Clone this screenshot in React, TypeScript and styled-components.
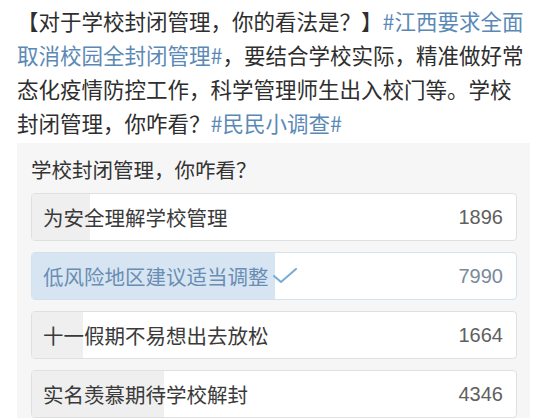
import React from 'react';
import styled, { createGlobalStyle } from 'styled-components';

interface Option {
  label: string;
  votes: number;
  chosen?: boolean;
}

const options: Option[] = [
  { label: '为安全理解学校管理', votes: 1896 },
  { label: '低风险地区建议适当调整', votes: 7990, chosen: true },
  { label: '十一假期不易想出去放松', votes: 1664 },
  { label: '实名羡慕期待学校解封', votes: 4346 },
];

const total = options.reduce((sum, o) => sum + o.votes, 0);

const GlobalStyle = createGlobalStyle`
  body {
    margin: 0;
    background: #ffffff;
    font-family: "Noto Sans CJK SC", "Noto Sans", sans-serif;
  }
`;

const Page = styled.div`
  width: 548px;
  height: 418px;
  overflow: hidden;
  padding: 4px 18px 0 17px;
  box-sizing: border-box;
`;

const Body = styled.p`
  margin: 0;
  font-size: 21.5px;
  line-height: 34px;
  color: #2e2e2e;
`;

const Tag = styled.span`
  color: #5b89b6;
`;

const Poll = styled.div`
  margin-top: 3px;
  background: #f6f6f6;
  padding: 13px 13px 14px 14px;
  display: flex;
  flex-direction: column;
`;

const Title = styled.div`
  font-size: 20.5px;
  line-height: 26px;
  color: #333333;
  margin-bottom: 11px;
`;

const List = styled.div`
  display: flex;
  flex-direction: column;
  gap: 11px;
`;

const Row = styled.div<{ $chosen?: boolean }>`
  position: relative;
  height: 48px;
  box-sizing: border-box;
  border: 1px solid ${(p) => (p.$chosen ? '#d3e2ee' : '#e0e0e0')};
  border-radius: 4px;
  background: #ffffff;
  overflow: hidden;
  display: flex;
  align-items: center;
  padding: 0 13px 0 11px;
`;

const Fill = styled.div<{ $chosen?: boolean }>`
  position: absolute;
  left: 0;
  top: 0;
  bottom: 0;
  background: ${(p) => (p.$chosen ? '#d7e5f2' : '#efefef')};
`;

const Label = styled.span<{ $chosen?: boolean }>`
  position: relative;
  font-size: 20.5px;
  color: ${(p) => (p.$chosen ? '#6a8db3' : '#3a3a3a')};
  display: flex;
  align-items: center;
  gap: 4px;
`;

const Count = styled.span<{ $chosen?: boolean }>`
  position: relative;
  margin-left: auto;
  font-family: "Liberation Sans", "Noto Sans", sans-serif;
  font-size: 20px;
  color: ${(p) => (p.$chosen ? '#7a8a9a' : '#606060')};
`;

const Check = () => (
  <svg width="24" height="16" viewBox="0 0 24 16">
    <path d="M1 8 L8 14 L23 1" fill="none" stroke="#78aad8" strokeWidth="2" strokeLinecap="round" strokeLinejoin="round" />
  </svg>
);

export default function App() {
  return (
    <Page>
      <GlobalStyle />
      <Body>
        【对于学校封闭管理，你的看法是？】<Tag>#江西要求全面取消校园全封闭管理#</Tag>，要结合学校实际，精准做好常态化疫情防控工作，科学管理师生出入校门等。学校封闭管理，你咋看？<Tag>#民民小调查#</Tag>
      </Body>
      <Poll>
        <Title>学校封闭管理，你咋看？</Title>
        <List>
          {options.map((o) => (
            <Row key={o.label} $chosen={o.chosen}>
              <Fill $chosen={o.chosen} style={{ width: `${(o.votes / total) * 100}%` }} />
              <Label $chosen={o.chosen}>
                {o.label}
                {o.chosen && <Check />}
              </Label>
              <Count $chosen={o.chosen}>{o.votes}</Count>
            </Row>
          ))}
        </List>
      </Poll>
    </Page>
  );
}
